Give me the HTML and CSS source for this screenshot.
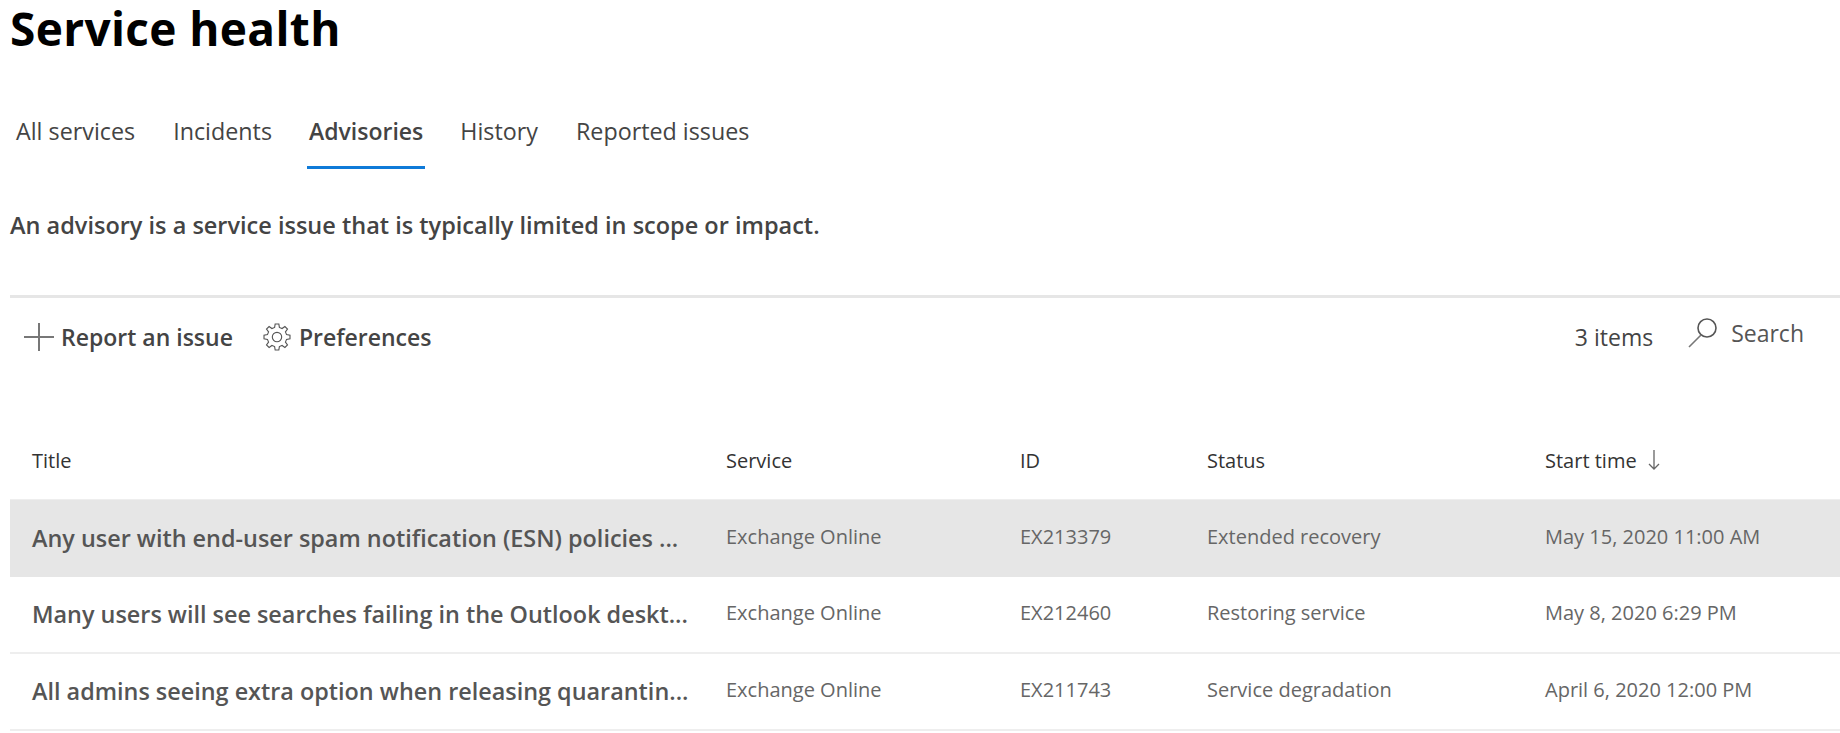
FILE: index.html
```html
<!DOCTYPE html>
<html lang="en">
<head>
  <meta charset="UTF-8" />
  <title>Service health</title>
  <link rel="stylesheet" href="styles.css">
</head>
<body>
  <h1>Service health</h1>

  <nav class="tabs">
    <a class="tab">All services</a>
    <a class="tab">Incidents</a>
    <a class="tab active">Advisories</a>
    <a class="tab">History</a>
    <a class="tab">Reported issues</a>
  </nav>

  <p class="intro">An advisory is a service issue that is typically limited in scope or impact.</p>

  <div class="toolbar">
    <button class="cmd">
      <svg class="icon-plus" width="30" height="30" viewBox="0 0 30 30"><path d="M0 15H30M15 1V29" stroke="#777" stroke-width="2" fill="none"/></svg>
      Report an issue
    </button>
    <button class="cmd cmd-pref">
      <svg width="30" height="30" viewBox="0 0 32 32"><polygon points="13.46,5.81 14.05,2.14 17.95,2.14 18.54,5.81 21.41,7 24.43,4.81 27.19,7.57 25,10.59 26.19,13.46 29.86,14.05 29.86,17.95 26.19,18.54 25,21.41 27.19,24.43 24.43,27.19 21.41,25 18.54,26.19 17.95,29.86 14.05,29.86 13.46,26.19 10.59,25 7.57,27.19 4.81,24.43 7,21.41 5.81,18.54 2.14,17.95 2.14,14.05 5.81,13.46 7,10.59 4.81,7.57 7.57,4.81 10.59,7" fill="none" stroke="#555" stroke-width="1.2"/><circle cx="16" cy="16" r="5" fill="none" stroke="#555" stroke-width="1.2"/></svg>
      Preferences
    </button>
    <span class="count">3 items</span>
    <div class="search">
      <svg width="30" height="30" viewBox="0 0 30 30"><circle cx="19" cy="10" r="9" fill="none" stroke="#555" stroke-width="1.6"/><path d="M13 17L1 29" stroke="#777" stroke-width="1.6" fill="none"/></svg>
      <span>Search</span>
    </div>
  </div>

  <div class="row head">
    <div>Title</div>
    <div>Service</div>
    <div>ID</div>
    <div>Status</div>
    <div class="sorted">Start time
      <svg width="12" height="20" viewBox="0 0 12 20"><path d="M6 0V19M1 14L6 19L11 14" stroke="#666" stroke-width="1.3" fill="none"/></svg>
    </div>
  </div>

  <div class="row item selected">
    <div class="name">Any user with end-user spam notification (ESN) policies ...</div>
    <div class="cell">Exchange Online</div>
    <div class="cell">EX213379</div>
    <div class="cell">Extended recovery</div>
    <div class="cell">May 15, 2020 11:00 AM</div>
  </div>
  <div class="row item">
    <div class="name">Many users will see searches failing in the Outlook deskt...</div>
    <div class="cell">Exchange Online</div>
    <div class="cell">EX212460</div>
    <div class="cell">Restoring service</div>
    <div class="cell">May 8, 2020 6:29 PM</div>
  </div>
  <div class="row item">
    <div class="name">All admins seeing extra option when releasing quarantin...</div>
    <div class="cell">Exchange Online</div>
    <div class="cell">EX211743</div>
    <div class="cell">Service degradation</div>
    <div class="cell">April 6, 2020 12:00 PM</div>
  </div>
</body>
</html>
```

FILE: styles.css
```css
body {
  margin: 0;
  padding-left: 10px;
  font-family: "Open Sans", "Noto Sans", sans-serif;
  background: white;
  color: #444;
  overflow: hidden;
}

h1 {
  margin: 0;
  height: 56px;
  font-size: 46px;
  line-height: 56px;
  font-weight: 700;
  letter-spacing: 0.35px;
  color: black;
}

.tabs {
  display: flex;
  gap: 38px;
  height: 70px;
  margin-top: 43px;
  padding-left: 6px;
  font-size: 23.3px;
  color: #444;
}

.tab {
  height: 67px;
  line-height: 64px;
}

.tab.active {
  font-size: 23px;
  font-weight: 600;
  border-bottom: 3px solid #0f7ad8;
  margin: 0 -3px;
  padding: 0 2px;
}

.intro {
  margin: 0;
  height: 126px;
  padding-top: 39px;
  box-sizing: border-box;
  font-size: 23.5px;
  line-height: 34px;
  font-weight: 600;
}

.toolbar {
  display: flex;
  align-items: center;
  height: 82px;
  border-top: 3px solid #e6e6e6;
  padding-left: 14px;
  padding-bottom: 2px;
  box-sizing: border-box;
  font-size: 23px;
}

.cmd {
  display: flex;
  align-items: center;
  gap: 7px;
  padding: 0;
  border: none;
  background: none;
  font: inherit;
  font-weight: 600;
  color: #444;
}

.cmd-pref {
  margin-left: 29px;
  gap: 7px;
}

.count {
  margin-left: auto;
}

.search {
  display: flex;
  align-items: center;
  gap: 13px;
  margin-left: 35px;
  margin-right: 36px;
  margin-top: -8px;
  color: #555;
}

.row {
  display: grid;
  grid-template-columns: 694px 294px 187px 338px 1fr;
  padding-left: 22px;
  align-items: center;
}

.head {
  height: 123px;
  box-sizing: border-box;
  padding-top: 44px;
  font-size: 20px;
  font-weight: 400;
  color: #333;
  border-bottom: 1px solid #eee;
}

.sorted {
  display: flex;
  align-items: center;
  gap: 11px;
}

.item {
  height: 77px;
  box-sizing: border-box;
  border-bottom: 2px solid #eee;
  font-size: 20px;
  color: #666;
}

.item.selected {
  background: #e6e6e6;
  border-bottom: none;
}

.name {
  font-size: 23.4px;
  font-weight: 600;
  color: #555;
  padding-bottom: 2px;
}

.cell {
  padding-bottom: 4px;
}
```
